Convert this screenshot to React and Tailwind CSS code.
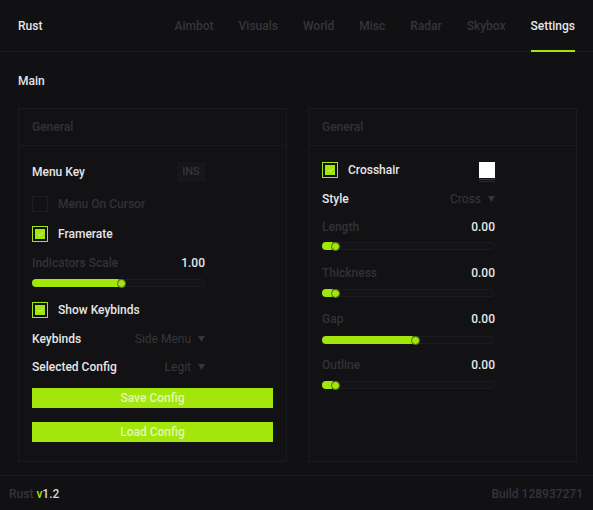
import React from "react";

const LIME = "bg-[#a2e60c]";

function Checkbox({ checked }) {
  if (!checked)
    return <div className="w-4 h-4 border border-[#1f1e22] bg-[#121115]" />;
  return (
    <div className="w-4 h-4 border border-[#a2e60c] p-[2px] bg-[#111013]">
      <div className="w-full h-full bg-[#a2e60c] flex items-center justify-center">
        <svg width="7" height="6" viewBox="0 0 7 6">
          <path d="M1 3 L3 5 L6 1" stroke="#c8f06a" strokeWidth="1" fill="none" />
        </svg>
      </div>
    </div>
  );
}

function Slider({ pct, mt }) {
  return (
    <div className={`relative h-[8px] w-[173px] ${mt}`}>
      <div className="absolute inset-0 rounded-full bg-[#141317] border border-[#1c1b1f]" />
      <div
        className="absolute left-0 top-0 h-[8px] rounded-full bg-[#a2e60c]"
        style={{ width: `calc(${pct}% + 8px)` }}
      />
      <div
        className="absolute top-[-0.5px] w-[9px] h-[9px] rounded-full bg-[#a2e60c] border-[1.5px] border-[#4f6a12]"
        style={{ left: `calc(${pct}% + 4px)` }}
      />
    </div>
  );
}

function Dropdown({ value }) {
  return (
    <div className="flex items-center gap-[7px] text-[#37363b]">
      <span>{value}</span>
      <svg width="7" height="6" viewBox="0 0 7 6">
        <path d="M0 0 L7 0 L3.5 6 Z" fill="#37363b" />
      </svg>
    </div>
  );
}

function Panel({ children }) {
  return (
    <div className="w-[269px] h-[354px] border border-[#1b1a1e] bg-[#121114] flex flex-col">
      <div className="h-[37px] border-b border-[#1b1a1e] flex items-center pl-[13px] text-[#323137] text-[12px] font-medium">
        General
      </div>
      <div className="px-[13px] flex flex-col">{children}</div>
    </div>
  );
}

export default function App() {
  const tabs = ["Aimbot", "Visuals", "World", "Misc", "Radar", "Skybox"];
  return (
    <div
      className="w-[593px] h-[510px] bg-[#111013] text-[12px] flex flex-col overflow-hidden"
      style={{ fontFamily: "Roboto, 'Liberation Sans', sans-serif" }}
    >
      {/* header */}
      <div className="h-[52px] border-b border-[#1b1a1e] flex items-stretch pl-[18px] pr-[18px]">
        <div className="flex items-center font-medium text-[#e6e6e8] pt-[1px]">Rust</div>
        <div className="ml-auto flex items-stretch gap-[25px]">
          {tabs.map((t) => (
            <div key={t} className="flex items-center font-medium text-[#36353a] pt-[1px]">
              {t}
            </div>
          ))}
          <div className="relative flex items-center font-medium text-[#e6e6e8] pt-[1px]">
            Settings
            <div className="absolute left-0 right-0 bottom-[-1px] h-[2px] bg-[#a2e60c]" />
          </div>
        </div>
      </div>

      {/* main */}
      <div className="pl-[18px] pr-[16px] flex-1">
        <div className="h-[28px] mt-[15px] flex items-center font-medium text-[#e6e6e8]">Main</div>
        <div className="mt-[13px] flex gap-[21px]">
          <Panel>
            <div className="mt-[16px] h-[20px] flex items-center justify-between w-[173px]">
              <span className="font-medium text-[#e6e6e8]">Menu Key</span>
              <div className="w-[28px] h-[20px] bg-[#17161a] flex items-center justify-center text-[#36353a] font-medium text-[11px]">
                INS
              </div>
            </div>
            <div className="mt-[14px] h-[16px] flex items-center gap-[10px]">
              <Checkbox checked={false} />
              <span className="font-medium text-[#333237]">Menu On Cursor</span>
            </div>
            <div className="mt-[14px] h-[16px] flex items-center gap-[10px]">
              <Checkbox checked />
              <span className="font-medium text-[#e6e6e8]">Framerate</span>
            </div>
            <div className="mt-[14px] h-[14px] flex items-center justify-between w-[173px]">
              <span className="font-medium text-[#333237]">Indicators Scale</span>
              <span className="font-medium text-[#e6e6e8]">1.00</span>
            </div>
            <Slider pct={47} mt="mt-[9px]" />
            <div className="mt-[15px] h-[16px] flex items-center gap-[10px]">
              <Checkbox checked />
              <span className="font-medium text-[#e6e6e8]">Show Keybinds</span>
            </div>
            <div className="mt-[14px] h-[14px] flex items-center justify-between w-[173px]">
              <span className="font-medium text-[#e6e6e8]">Keybinds</span>
              <Dropdown value="Side Menu" />
            </div>
            <div className="mt-[14px] h-[14px] flex items-center justify-between w-[173px]">
              <span className="font-medium text-[#e6e6e8]">Selected Config</span>
              <Dropdown value="Legit" />
            </div>
            <button className={`mt-[14px] h-[20px] w-[241px] ${LIME} text-[#e2f6b4] font-medium text-[12px]`}>
              Save Config
            </button>
            <button className={`mt-[14px] h-[20px] w-[241px] ${LIME} text-[#e2f6b4] font-medium text-[12px]`}>
              Load Config
            </button>
          </Panel>
          <Panel>
            <div className="mt-[16px] h-[16px] flex items-center justify-between w-[173px]">
              <div className="flex items-center gap-[10px]">
                <Checkbox checked />
                <span className="font-medium text-[#e6e6e8]">Crosshair</span>
              </div>
              <div className="relative w-[16px] h-[16px] bg-white">
                <div className="absolute left-0 right-0 top-[17px] h-[1px] bg-[#3a393e]" />
                <div className="absolute left-0 right-0 top-[19px] h-[1px] bg-[#2a292e]" />
              </div>
            </div>
            <div className="mt-[14px] h-[14px] flex items-center justify-between w-[173px]">
              <span className="font-medium text-[#e6e6e8]">Style</span>
              <Dropdown value="Cross" />
            </div>
            <div className="mt-[14px] h-[14px] flex items-center justify-between w-[173px]">
              <span className="font-medium text-[#333237]">Length</span>
              <span className="font-medium text-[#e6e6e8]">0.00</span>
            </div>
            <Slider pct={3} mt="mt-[8px]" />
            <div className="mt-[16px] h-[14px] flex items-center justify-between w-[173px]">
              <span className="font-medium text-[#333237]">Thickness</span>
              <span className="font-medium text-[#e6e6e8]">0.00</span>
            </div>
            <Slider pct={3} mt="mt-[9px]" />
            <div className="mt-[15px] h-[14px] flex items-center justify-between w-[173px]">
              <span className="font-medium text-[#333237]">Gap</span>
              <span className="font-medium text-[#e6e6e8]">0.00</span>
            </div>
            <Slider pct={49} mt="mt-[10px]" />
            <div className="mt-[14px] h-[14px] flex items-center justify-between w-[173px]">
              <span className="font-medium text-[#333237]">Outline</span>
              <span className="font-medium text-[#e6e6e8]">0.00</span>
            </div>
            <Slider pct={3} mt="mt-[9px]" />
          </Panel>
        </div>
      </div>

      {/* footer */}
      <div className="h-[35px] border-t border-[#1b1a1e] flex items-center justify-between pl-[9px] pr-[10px] font-medium pt-[1px]">
        <div>
          <span className="text-[#36353a]">Rust </span>
          <span className="text-[#a2e60c]">v</span>
          <span className="text-[#d6d6d8]">1.2</span>
        </div>
        <div className="text-[#36353a]">Build 128937271</div>
      </div>
    </div>
  );
}
